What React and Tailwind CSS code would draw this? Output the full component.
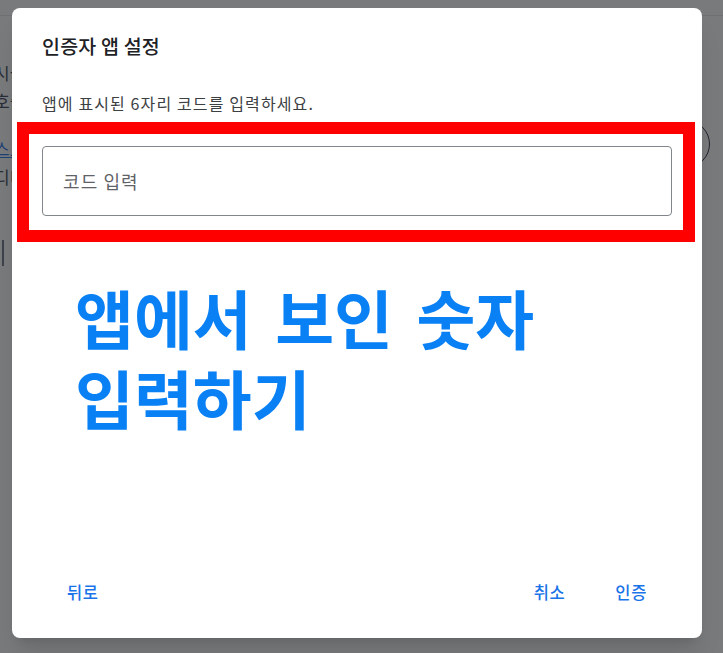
import React from 'react';

const font = { fontFamily: '"Noto Sans CJK KR", "Noto Sans", sans-serif' };

export default function App() {
    return (
        <div className="relative h-[653px] w-full overflow-hidden bg-white" style={font}>
            {/* page behind the modal */}
            <div className="h-[16px] border-b border-gray-200"></div>
            <div className="-ml-[6px] flex flex-col text-[17px] leading-[26px] text-gray-700">
                <span className="mt-[44px]">시뮬</span>
                <span className="mt-[2px]">호출</span>
                <span className="mt-[22px] text-[#1a73e8] underline">스토</span>
                <span className="mt-[2px]">디디</span>
                <span className="mt-[50px] w-[10px] h-[26px] border-r-2 border-gray-500"></span>
            </div>
            <div className="absolute left-[640px] top-[120px] w-[70px] h-[48px] rounded-full border border-gray-800"></div>

            {/* scrim */}
            <div className="absolute inset-0 bg-[#202124]/60"></div>

            {/* dialog */}
            <div className="absolute left-[12px] top-[8px] w-[690px] h-[630px] flex flex-col rounded-lg bg-white shadow-xl">
                <div className="flex-1 px-[30px] pt-6">
                    <h2 className="text-[19.5px] leading-7 font-medium text-[#202124] tracking-[0.01em]">인증자 앱 설정</h2>
                    <p className="mt-[31px] text-[16px] leading-6 text-[#3c4043] tracking-[0.07em]">앱에 표시된 6자리 코드를 입력하세요.</p>
                    <input
                        type="text"
                        placeholder="코드 입력"
                        className="mt-[31px] w-full h-[70px] px-5 rounded border border-[#80868b] text-[18px] tracking-[0.06em] text-[#202124] placeholder:text-[#5f6368] outline-none"
                    />
                </div>
                <div className="flex items-center px-[43px] pb-[28px]">
                    <button className="px-3 h-9 text-[16.5px] font-medium tracking-[0.04em] text-[#1a73e8]">뒤로</button>
                    <div className="flex-1"></div>
                    <button className="px-3 h-9 text-[16.5px] font-medium tracking-[0.04em] text-[#1a73e8]">취소</button>
                    <button className="ml-[26px] px-3 h-9 text-[16.5px] font-medium tracking-[0.04em] text-[#1a73e8]">인증</button>
                </div>
            </div>

            {/* annotation */}
            <div className="absolute left-[17px] top-[122px] w-[678px] h-[120px] border-[12px] border-[#ff0000]"></div>
            <div className="absolute left-[75px] top-[276px] text-[64px] leading-[80px] font-bold text-[#0a80f5] [word-spacing:9px]">
                앱에서 보인 숫자<br />입력하기
            </div>
        </div>
    );
}
